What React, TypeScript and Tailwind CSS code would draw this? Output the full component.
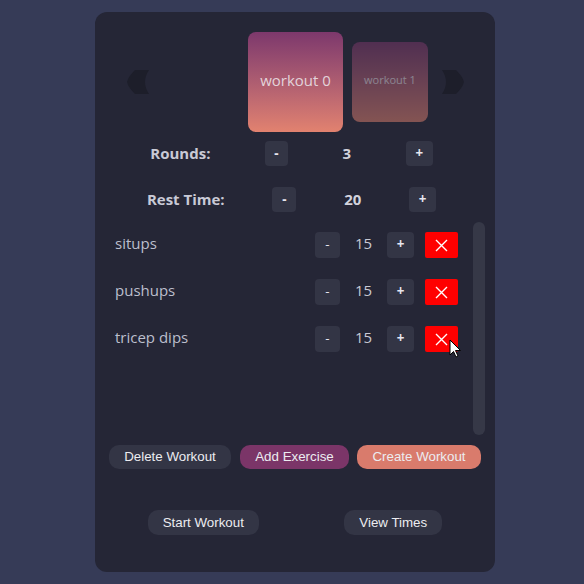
import React from "react";

const exercises = [
  { name: "situps", reps: 15 },
  { name: "pushups", reps: 15 },
  { name: "tricep dips", reps: 15 },
];

function Arrow({ flip }: { flip?: boolean }) {
  return (
    <svg width="24" height="26" viewBox="0 0 24 26" className={flip ? "-scale-x-100" : ""}>
      <path d="M23 1 L9 1 Q2 8 1 13 Q2 18 9 25 L23 25 Q15 13 23 1 Z" fill="#1d1e2a" />
    </svg>
  );
}

function StepButton({ label, w }: { label: string; w: string }) {
  return (
    <button className={`${w} h-[25px] rounded-[4px] bg-[#333545] text-[13.33px] font-bold text-[#e6e6ee] flex items-center justify-center`}>
      {label}
    </button>
  );
}

export default function App() {
  return (
    <div className="min-h-screen bg-[#363b57] flex pl-[95px] pt-[12px]" style={{ fontFamily: '"Open Sans", sans-serif' }}>
      <div className="relative w-[400px] h-[560px] rounded-[12px] bg-[#252636] pt-[20px]">
        {/* carousel */}
        <div className="flex items-center h-[100px] pl-[31px]">
          <Arrow />
          <div className="ml-[98px] w-[95px] h-[100px] rounded-[8px] bg-gradient-to-b from-[#7d386c] to-[#e2826f] flex items-center justify-center">
            <span className="text-[15px] text-[#e3d3da] -mt-[3px]">workout 0</span>
          </div>
          <div className="ml-[9px] w-[76px] h-[80px] rounded-[8px] bg-gradient-to-b from-[#7d386c] to-[#e2826f] opacity-50 flex items-center justify-center">
            <span className="text-[11px] text-[#f0e0e8] -mt-[3px]">workout 1</span>
          </div>
          <div className="ml-[13px]">
            <Arrow flip />
          </div>
        </div>

        {/* settings */}
        <div className="ml-[28px] mr-[35px] mt-[9px] flex items-center justify-around h-[25px]">
          <span className="text-[15px] font-bold text-[#c9cad6]">Rounds:</span>
          <StepButton label="-" w="w-[23px]" />
          <span className="text-[15px] font-bold text-[#d2d2dc]">3</span>
          <StepButton label="+" w="w-[27px]" />
        </div>
        <div className="ml-[28px] mr-[35px] mt-[21px] flex items-center justify-around h-[25px]">
          <span className="text-[15px] font-bold text-[#c9cad6]">Rest Time:</span>
          <StepButton label="-" w="w-[24px]" />
          <span className="text-[15px] font-bold text-[#d2d2dc]">20</span>
          <StepButton label="+" w="w-[27px]" />
        </div>

        {/* exercise list */}
        <div className="mt-[10px] mx-[10px] h-[213px] flex">
          <div className="flex-1 pl-[10px] pr-[15px] pt-[10px] flex flex-col gap-[21px]">
            {exercises.map((ex) => (
              <div key={ex.name} className="flex items-center h-[26px]">
                <span className="flex-1 text-[15px] text-[#bcbfcd] -mt-[4px]">{ex.name}</span>
                <button className="w-[25px] h-[26px] rounded-[4px] bg-[#333545] text-[13.33px] text-[#e6e6ee]">-</button>
                <span className="w-[47px] text-center text-[15px] text-[#c8c9d3] -mt-[4px]">{ex.reps}</span>
                <button className="w-[27px] h-[26px] rounded-[4px] bg-[#333545] text-[13.33px] font-bold text-[#e6e6ee]">+</button>
                <button className="ml-[11px] w-[33px] h-[26px] rounded-[2px] bg-[#ff0000] flex items-center justify-center">
                  <svg width="13" height="13" viewBox="0 0 13 13">
                    <path d="M1 1 L12 12 M12 1 L1 12" stroke="#fff" strokeWidth="1.4" />
                  </svg>
                </button>
              </div>
            ))}
          </div>
          <div className="w-[12px] h-full rounded-full bg-[#363847]" />
        </div>

        {/* actions */}
        <div className="mt-[10px] mx-[10px] px-[4px] flex text-[13.33px] text-[#ececf0]" style={{ fontFamily: '"Liberation Sans", Arial, sans-serif' }}>
          <button className="h-[24px] w-[122px] rounded-[10px] bg-[#333545]">Delete Workout</button>
          <button className="ml-[9px] h-[24px] w-[109px] rounded-[10px] bg-[#7b3568]">Add Exercise</button>
          <button className="ml-[8px] h-[24px] w-[124px] rounded-[10px] bg-[#d97b6c]">Create Workout</button>
        </div>
        <div className="mt-[41px] mx-[10px] flex justify-around text-[13.33px] text-[#ececf0]" style={{ fontFamily: '"Liberation Sans", Arial, sans-serif' }}>
          <button className="h-[25px] w-[111px] rounded-[10px] bg-[#333545]">Start Workout</button>
          <button className="h-[25px] w-[98px] rounded-[10px] bg-[#333545]">View Times</button>
        </div>

        {/* mouse cursor */}
        <svg className="absolute left-[354px] top-[327px]" width="13" height="19" viewBox="0 0 13 19">
          <path d="M1 1 L1 16 L4.5 12.5 L7 18 L9 17 L6.5 11.5 L11.5 11.5 Z" fill="#fff" stroke="#000" strokeWidth="1" />
        </svg>
      </div>
    </div>
  );
}
